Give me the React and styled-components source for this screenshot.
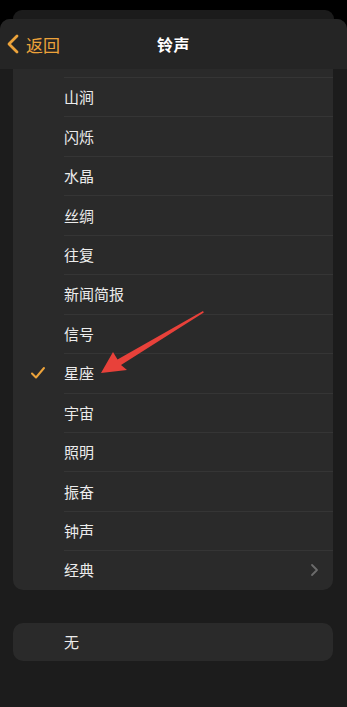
import React from "react";
import styled, { createGlobalStyle } from "styled-components";

const GlobalStyle = createGlobalStyle`
  html, body {
    margin: 0;
    padding: 0;
    background: #000;
  }
  body {
    font-family: "Noto Sans CJK SC", "Noto Sans", sans-serif;
    -webkit-font-smoothing: antialiased;
  }
`;

const ORANGE = "#eda33a";

const tones = [
  "山涧",
  "闪烁",
  "水晶",
  "丝绸",
  "往复",
  "新闻简报",
  "信号",
  "星座",
  "宇宙",
  "照明",
  "振奋",
  "钟声",
  "经典",
];

const Screen = styled.div`
  width: 347px;
  height: 707px;
  background: #000;
  display: flex;
  flex-direction: column;
  overflow: hidden;
`;

const BackSheet = styled.div`
  margin: 10px 13px 0;
  height: 9px;
  border-radius: 10px 10px 0 0;
  background: #1b1b1b;
  flex-shrink: 0;
`;

const Sheet = styled.div`
  position: relative;
  flex: 1;
  background: #1c1c1c;
  border-radius: 10px 10px 0 0;
  display: flex;
  flex-direction: column;
  overflow: hidden;
`;

const NavBar = styled.div`
  height: 50px;
  flex-shrink: 0;
  background: #252525;
  display: grid;
  grid-template-columns: 1fr auto 1fr;
  align-items: center;
  padding: 0 6px;
`;

const BackButton = styled.div`
  display: flex;
  align-items: center;
  gap: 6px;
  color: ${ORANGE};
  font-size: 17px;
  svg {
    display: block;
  }
`;

const Title = styled.div`
  color: #fff;
  font-size: 16px;
  font-weight: 700;
  letter-spacing: 0.5px;
`;

const Content = styled.div`
  padding: 0 14px 0 13px;
  display: flex;
  flex-direction: column;
  gap: 33px;
`;

const Group = styled.div`
  background: #2a2a2a;
  border-radius: ${(p) => (p.$clipped ? "0 0 10px 10px" : "10px")};
  padding-top: ${(p) => (p.$clipped ? "8px" : "0")};
  overflow: hidden;
`;

const Row = styled.div`
  height: ${(p) => (p.$short ? "38.5px" : "39.45px")};
  display: flex;
  align-items: center;
  position: relative;
  padding-left: 51px;
  padding-right: 14px;
  box-sizing: border-box;

  &::before {
    content: "";
    display: ${(p) => (p.$divider ? "block" : "none")};
    position: absolute;
    top: 0;
    left: 51px;
    right: 0;
    height: 1px;
    background: #353535;
  }
`;

const Check = styled.span`
  position: absolute;
  left: 17px;
  top: 50%;
  transform: translateY(-50%);
  display: flex;
`;

const Label = styled.span`
  flex: 1;
  color: #ececec;
  font-size: 15px;
`;

const Arrow = styled.svg`
  position: absolute;
  left: 0;
  top: 0;
  pointer-events: none;
`;

function ChevronLeft() {
  return (
    <svg width="14" height="22" viewBox="0 0 14 22">
      <path
        d="M11 3 L3 11 L11 19"
        fill="none"
        stroke={ORANGE}
        strokeWidth="2.8"
        strokeLinecap="round"
        strokeLinejoin="round"
      />
    </svg>
  );
}

function ChevronRight() {
  return (
    <svg width="9" height="14" viewBox="0 0 9 14">
      <path
        d="M2 2 L7 7 L2 12"
        fill="none"
        stroke="#6b6b6b"
        strokeWidth="1.8"
        strokeLinecap="round"
        strokeLinejoin="round"
      />
    </svg>
  );
}

function CheckMark() {
  return (
    <svg width="16" height="14" viewBox="0 0 16 14">
      <path
        d="M2 7.5 L6 11.5 L14 2"
        fill="none"
        stroke={ORANGE}
        strokeWidth="2"
        strokeLinecap="round"
        strokeLinejoin="round"
      />
    </svg>
  );
}

export default function App() {
  return (
    <>
      <GlobalStyle />
      <Screen>
        <BackSheet />
        <Sheet>
          <NavBar>
            <BackButton>
              <ChevronLeft />
              返回
            </BackButton>
            <Title>铃声</Title>
            <div />
          </NavBar>
          <Content>
            <Group $clipped>
              {tones.map((t) => (
                <Row key={t} $divider>
                  {t === "星座" && (
                    <Check>
                      <CheckMark />
                    </Check>
                  )}
                  <Label>{t}</Label>
                  {t === "经典" && <ChevronRight />}
                </Row>
              ))}
            </Group>
            <Group>
              <Row $short>
                <Label>无</Label>
              </Row>
            </Group>
          </Content>
          <Arrow width="347" height="688" viewBox="0 19 347 688">
            <path
              d="M203 311 L203.8 312.4 L121 365 L127 370 L101 373 L113 352 L117.5 359.5 Z"
              fill="#e8413a"
            />
          </Arrow>
        </Sheet>
      </Screen>
    </>
  );
}
